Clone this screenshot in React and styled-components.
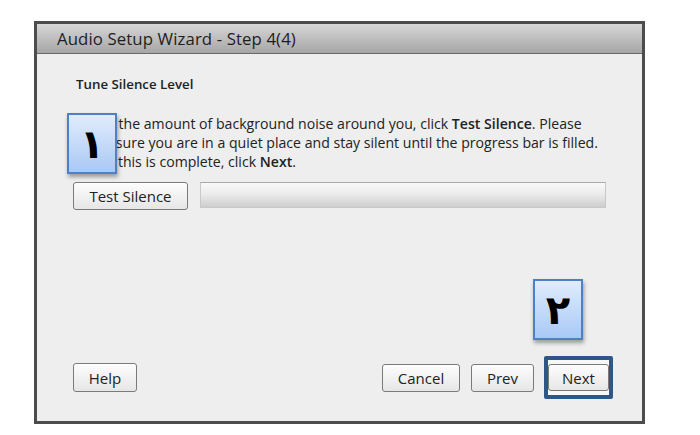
import React from 'react';
import styled, { createGlobalStyle } from 'styled-components';

const GlobalStyle = createGlobalStyle`
    body {
        margin: 0;
        background: #ffffff;
        font-family: "Open Sans", "Noto Sans", sans-serif;
        color: #222;
    }
`;

const Page = styled.div`
    width: 700px;
    height: 435px;
    padding: 21px 0 0 34px;
    box-sizing: border-box;
`;

const Dialog = styled.div`
    width: 611px;
    height: 403px;
    box-sizing: border-box;
    border: 3px solid #4c4c4c;
    display: flex;
    flex-direction: column;
    background: #eeeeee;
`;

const TitleBar = styled.div`
    height: 29px;
    flex-shrink: 0;
    display: flex;
    align-items: center;
    padding-left: 20px;
    background: linear-gradient(#d6d6d6, #a6a6a6);
    border-bottom: 1px solid #6a6a6a;
    font-size: 16.8px;
    letter-spacing: 0.1px;
    color: #1e1e1e;
`;

const Body = styled.div`
    position: relative;
    flex: 1;
    display: flex;
    flex-direction: column;
    padding: 21px 29px 22px 36px;
`;

const Heading = styled.div`
    font-size: 13.3px;
    font-weight: 600;
    line-height: 18px;
    padding-left: 3px;
`;

const Para = styled.p`
    margin: 21px 0 0;
    padding-left: 3px;
    font-size: 14.1px;
    line-height: 19px;
    white-space: nowrap;

    b {
        font-weight: 600;
    }
`;

const TestRow = styled.div`
    display: flex;
    gap: 12px;
    margin-top: 11px;
    padding-right: 7px;
`;

const Button = styled.button`
    height: ${p => p.$h || 28}px;
    width: ${p => p.$w}px;
    padding: 0;
    border: 1px solid #7a7a7a;
    border-radius: 3px;
    background: linear-gradient(#fdfdfd, #e6e6e6);
    font-family: "Open Sans", "Noto Sans", sans-serif;
    font-size: 15px;
    color: #222;
    box-shadow: inset 0 1px 0 #ffffff;
`;

const Progress = styled.div`
    flex: 1;
    height: 26px;
    box-sizing: border-box;
    border: 1px solid #c8c8c8;
    border-top-color: #a9a9a9;
    background: linear-gradient(#f9f9f9, #ececec 45%, #cdcdcd);
`;

const Footer = styled.div`
    margin-top: auto;
    display: flex;
    align-items: center;
`;

const Spacer = styled.div`
    flex: 1;
`;

const FocusRing = styled.div`
    display: flex;
    padding: 4px 0;
    border: 4px solid #2e5687;
    border-radius: 2px;
    background: #f7f7f7;
    margin-left: 10px;
`;

const Badge = styled.div`
    position: absolute;
    left: ${p => p.$x}px;
    top: ${p => p.$y}px;
    width: 50px;
    height: 61px;
    box-sizing: border-box;
    border: 2px solid #4f80c6;
    background: linear-gradient(#e1ecfc, #a9c9f6);
    box-shadow: 1px 3px 4px rgba(0, 0, 0, 0.35);
    display: flex;
    align-items: center;
    justify-content: center;
    font-family: "DejaVu Sans", "Noto Sans", sans-serif;
    font-size: 40px;
    font-weight: 700;
    line-height: 1;
    color: #000;
`;

const App = () => {
    return (
        <Page>
            <GlobalStyle />
            <Dialog>
                <TitleBar>Audio Setup Wizard - Step 4(4)</TitleBar>
                <Body>
                    <Heading>Tune Silence Level</Heading>
                    <Para>
                        Select the amount of background noise around you, click <b>Test Silence</b>. Please<br />
                        make sure you are in a quiet place and stay silent until the progress bar is filled.<br />
                        When this is complete, click <b>Next</b>.
                    </Para>
                    <TestRow>
                        <Button $w={115}>Test Silence</Button>
                        <Progress />
                    </TestRow>
                    <Footer>
                        <Button $w={64} $h={29}>Help</Button>
                        <Spacer />
                        <Button $w={78}>Cancel</Button>
                        <Button $w={63} style={{ marginLeft: 11 }}>Prev</Button>
                        <FocusRing>
                            <Button $w={61} $h={27}>Next</Button>
                        </FocusRing>
                    </Footer>
                    <Badge $x={30} $y={59}>١</Badge>
                    <Badge $x={496} $y={225}>٢</Badge>
                </Body>
            </Dialog>
        </Page>
    );
};

export default App;
